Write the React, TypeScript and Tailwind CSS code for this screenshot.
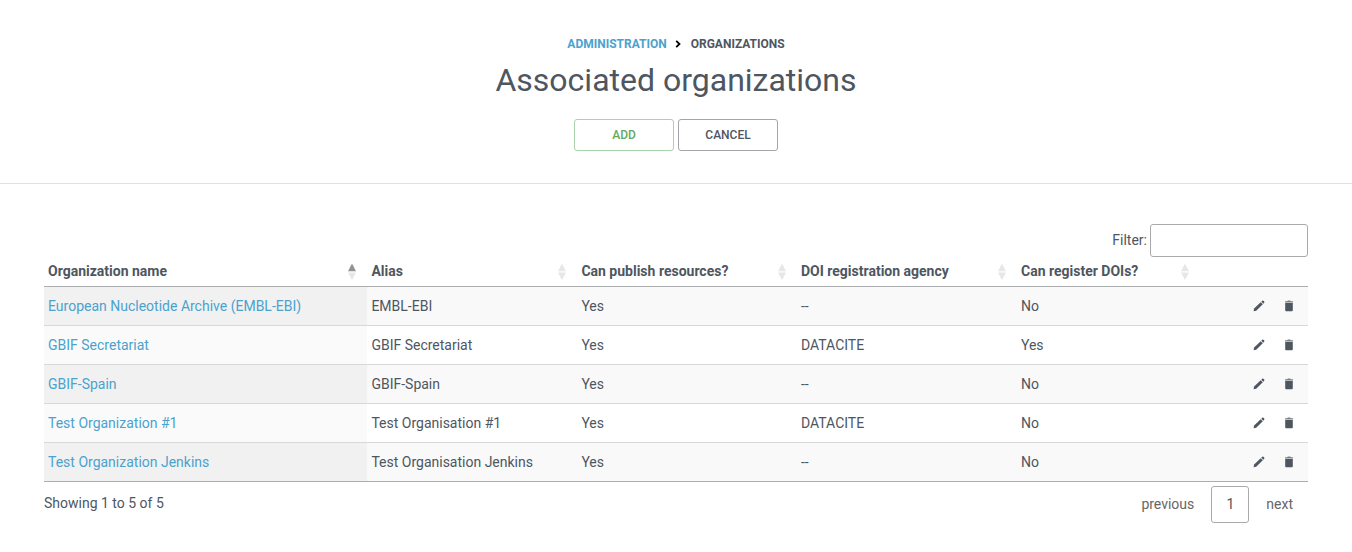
import React from "react";

type Row = { name: string; alias: string; publish: string; agency: string; register: string };

const rows: Row[] = [
  { name: "European Nucleotide Archive (EMBL-EBI)", alias: "EMBL-EBI", publish: "Yes", agency: "--", register: "No" },
  { name: "GBIF Secretariat", alias: "GBIF Secretariat", publish: "Yes", agency: "DATACITE", register: "Yes" },
  { name: "GBIF-Spain", alias: "GBIF-Spain", publish: "Yes", agency: "--", register: "No" },
  { name: "Test Organization #1", alias: "Test Organisation #1", publish: "Yes", agency: "DATACITE", register: "No" },
  { name: "Test Organization Jenkins", alias: "Test Organisation Jenkins", publish: "Yes", agency: "--", register: "No" },
];

const headers = ["Organization name", "Alias", "Can publish resources?", "DOI registration agency", "Can register DOIs?"];

const columns = "grid grid-cols-[323.4px_210px_219.6px_220px_183px_108px]";

function SortIcon({ active }: { active: boolean }) {
  return (
    <svg className="h-[18px] w-[8px]" viewBox="0 0 8 18">
      <path d="M4 .6 8 8.3H0z" fill={active ? "#8f9295" : "#e6e7e9"} />
      <path d="M0 9.4h8L4 17z" fill="#e6e7e9" />
    </svg>
  );
}

function PencilIcon() {
  return (
    <svg className="size-4" viewBox="0 0 16 16" fill="#4e565f">
      <path d="M2.6 13.3l.5-2.7 6.6-6.4 2.1 2.1-6.6 6.5z" />
      <path d="M10.3 3.7l.9-.9q.6-.5 1.2 0l.8.8q.5.6 0 1.2l-.9.9z" />
    </svg>
  );
}

function TrashIcon() {
  return (
    <svg className="size-4" viewBox="0 0 16 16" fill="#4e565f">
      <path d="M4 3.3h2.2l.6-.7h2.4l.6.7H12v1.2H4z" opacity=".75" />
      <path d="M4.2 4.9h7.6v7.4q0 1-1 1H5.2q-1 0-1-1z" />
    </svg>
  );
}

export default function App() {
  return (
    <div className="h-[552px] bg-white font-['Roboto',sans-serif] text-[14px] leading-[21px] text-[#4e565f]">
      <header className="flex h-[184px] flex-col items-center border-b border-[#dee2e6] pt-[35px]">
        <nav className="flex h-[18px] items-center text-[12px] leading-[18px] font-bold">
          <a className="text-[#4ba2ce]">ADMINISTRATION</a>
          <svg className="mr-[9.5px] ml-[8.5px] h-[8px] w-[6px]" viewBox="0 0 6 8" fill="none" stroke="#000" strokeWidth="1.8">
            <path d="M1.2.8 4.5 4 1.2 7.2" />
          </svg>
          <span>ORGANIZATIONS</span>
        </nav>
        <h1 className="mt-[8px] text-[32px] leading-[38px]">Associated organizations</h1>
        <div className="mt-[20px] flex gap-1">
          <button className="h-8 w-[100px] rounded-[3px] border border-[#a9d3ab] text-[12px] font-medium text-[#61a861]">ADD</button>
          <button className="h-8 w-[100px] rounded-[3px] border border-[#a2a5aa] text-[12px] font-medium">CANCEL</button>
        </div>
      </header>
      <main className="px-11 pt-10">
        <div className="flex h-[33px] items-center justify-end gap-[3px]">
          <label htmlFor="filter">Filter:</label>
          <input id="filter" className="h-[33px] w-[158px] rounded-[3px] border border-[#aaaaaa] bg-white" />
        </div>
        <div className={`${columns} h-[30px] border-b border-[#acadae]`}>
          {headers.map((h, i) => (
            <div key={h} className={`flex items-center justify-between pl-1 font-bold ${i < 2 ? "pr-[11.5px]" : "pr-[11px]"}`}>
              <span>{h}</span>
              <SortIcon active={i === 0} />
            </div>
          ))}
        </div>
        <div className="border-b border-[#acadae]">
          {rows.map((r, i) => (
            <div key={r.name} className={`${columns} ${i ? "h-[39px] border-t border-[#d8d8d8]" : "h-[38px]"} ${i % 2 ? "bg-white" : "bg-[#f9f9f9]"} items-center`}>
              <div className={`flex h-full items-center pl-1 text-[#4ba2ce] ${i % 2 ? "bg-[#fafafa]" : "bg-[#f1f1f1]"}`}>{r.name}</div>
              <div className="pl-1">{r.alias}</div>
              <div className="pl-1">{r.publish}</div>
              <div className="pl-1">{r.agency}</div>
              <div className="pl-1">{r.register}</div>
              <div className="flex justify-end gap-[14px] pr-[11px]">
                <PencilIcon />
                <TrashIcon />
              </div>
            </div>
          ))}
        </div>
        <div className="flex justify-between">
          <p className="pt-[11px]">Showing 1 to 5 of 5</p>
          <div className="flex items-center pt-1 text-[#666666]">
            <span className="pr-[17px]">previous</span>
            <span className="flex h-[37px] w-[38px] items-center justify-center rounded-[3px] border border-[#aaaaaa] text-[#4e565f]">1</span>
            <span className="pr-[15px] pl-[17px]">next</span>
          </div>
        </div>
      </main>
    </div>
  );
}
